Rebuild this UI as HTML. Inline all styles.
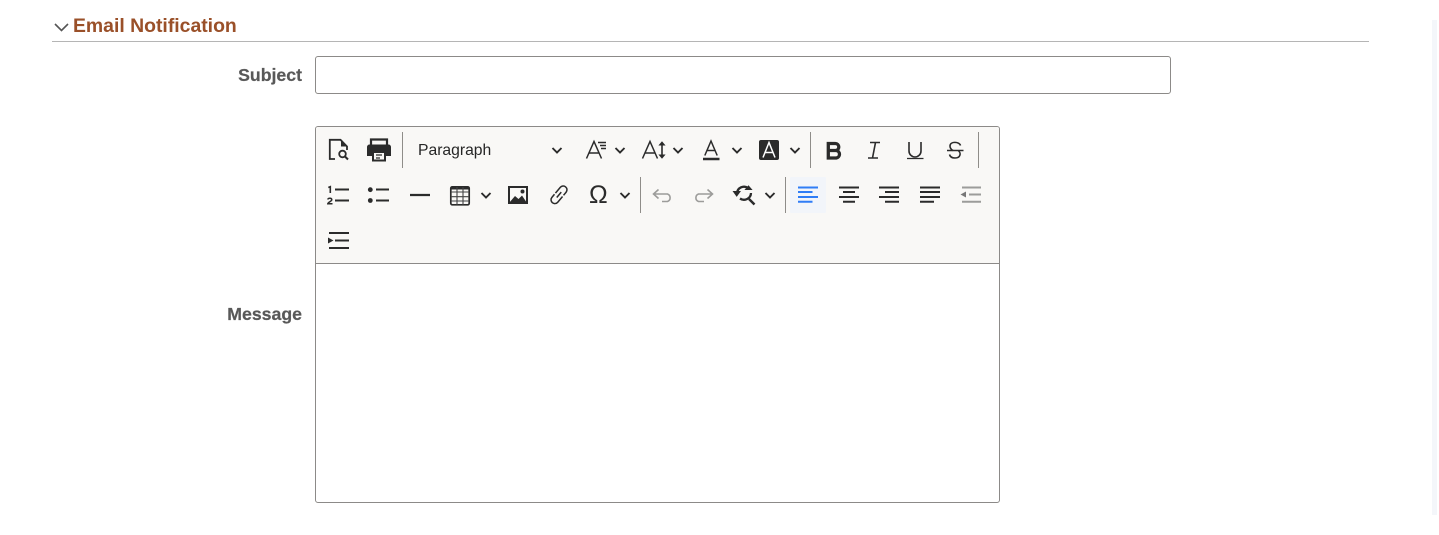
<!DOCTYPE html>
<html lang="en">
<head>
<meta charset="utf-8">
<title>Email Notification</title>
<style>
html,body{margin:0;padding:0;background:#fff;width:1439px;height:535px;overflow:hidden;font-family:"Liberation Sans",Arial,sans-serif}
.abs{position:absolute}
.title{left:73px;top:15px;font-size:19.400px;line-height:22px;font-weight:700;color:#9a5029;white-space:nowrap}
.rule{left:52px;top:41px;width:1317px;height:1px;background:#b5b5b5}
.label{font-size:17.700px;line-height:20px;font-weight:700;color:#595959;text-align:right;right:1137px;white-space:nowrap;-webkit-text-stroke:.2px #595959}
.input{left:315px;top:56px;width:854px;height:36px;border:1px solid #8c8a88;border-radius:3px;background:#fff}
.editor{left:315px;top:126px;width:683px;height:375px;border:1px solid #8c8a88;border-radius:3px;background:#fff;overflow:hidden}
.toolbar{left:0;top:0;width:683px;height:136px;background:#f9f8f6;border-bottom:1px solid #8c8a88}
.scroll{left:1432px;top:20px;width:5px;height:495px;background:#f4f6fa}
svg{position:absolute;left:0;top:0}
</style>
</head>
<body>
<div class="abs title">Email Notification</div>
<div class="abs rule"></div>
<div class="abs label" style="top:65px">Subject</div>
<div class="abs input"></div>
<div class="abs label" style="top:304px">Message</div>
<div class="abs editor"><div class="abs toolbar"></div></div>
<div class="abs scroll"></div>
<svg width="1439" height="535" viewBox="0 0 1439 535" fill="none" stroke="#2b2b2b" stroke-width="1.6">
<!-- section chevron -->
<path d="M55 24l6.500 6.500 6.500-6.500" stroke="#555" stroke-width="1.600"/>
<!-- separators -->
<g stroke="#8f8d89" stroke-width="1">
<path d="M402.500 132v36M810.500 132v36M978.500 132v36M640.500 177v36M785.500 177v36"/>
</g>
<!-- preview -->
<path d="M335 159H329.800V139.800H340.500L347 146.500V150" stroke-width="1.800"/>
<path d="M341 140.500l6 6h-6z" fill="#2b2b2b" stroke="none"/>
<circle cx="342.500" cy="154" r="3.300" stroke-width="1.800"/>
<path d="M345 156.500l3 3" stroke-width="2"/>
<!-- print -->
<path d="M371 146v-6.500h16v6.500" stroke-width="2.200"/>
<path d="M369.500 144.500h19a2.500 2.500 0 0 1 2.500 2.500v9h-5v-5h-14v5h-5v-9a2.500 2.500 0 0 1 2.500-2.500z" fill="#2b2b2b" stroke="none"/>
<path d="M373 152h12v8.500h-12z" stroke-width="2" fill="#f9f8f6"/>
<path d="M376 155h6M376 158h4" stroke-width="1.300"/>
<!-- chevrons -->
<g stroke-width="1.900">
<path d="M552.500 148l4.500 4.500 4.500-4.500"/>
<path d="M615.500 148l4.500 4.500 4.500-4.500"/>
<path d="M673.500 148l4.500 4.500 4.500-4.500"/>
<path d="M732.500 148l4.500 4.500 4.500-4.500"/>
<path d="M790.500 148l4.500 4.500 4.500-4.500"/>
<path d="M481.500 193l4.500 4.500 4.500-4.500"/>
<path d="M620.500 193l4.500 4.500 4.500-4.500"/>
<path d="M765.500 193l4.500 4.500 4.500-4.500"/>
</g>
<!-- font size -->
<path d="M586.500 158.500l7.500-17 7.500 17M589 153h10" stroke-width="1.500"/>
<path d="M598 142.500h8M600 145.500h6M601 148.500h5" stroke-width="1.400"/>
<!-- line height -->
<path d="M642.500 158.500l7.500-17 7.500 17M645 153h10" stroke-width="1.500"/>
<path d="M662 142.500v15" stroke-width="1.600"/>
<path d="M659.500 145l2.500-3 2.500 3zM659.500 155l2.500 3 2.500-3z" fill="#2b2b2b" stroke-width="1"/>
<!-- text colour -->
<path d="M704.800 155.500l6.200-14.500 6.200 14.500M707 150.500h8" stroke-width="1.500"/>
<path d="M703 159h16.500" stroke-width="2.400"/>
<!-- bg colour -->
<rect x="759" y="140" width="20" height="20" rx="2" fill="#2b2b2b" stroke="none"/>
<path d="M763 157.500l6-15 6 15M765 152.500h8" stroke="#fff" stroke-width="1.500"/>
<!-- B I U S -->
<path d="M828.300 143.500h7a3.500 3.500 0 0 1 0 7h-7zM828.300 150.500h8a3.800 3.800 0 0 1 0 7.500h-8z" stroke-width="3.300"/>
<path d="M870 142.500h10M868 158h10M875.500 142.500l-3 15.500" stroke-width="1.600"/>
<path d="M909 142v9a6 6 0 0 0 12 0v-9" stroke-width="1.600"/>
<path d="M907 158.500h16.500" stroke-width="1.300"/>
<path d="M960.500 145.500C959.500 141.500 950 141 950 146c0 2 1 3.500 3 4.500M958.500 151C961 152.500 961 158 955 158c-3.500 0-5-1.500-5.500-3.500" stroke-width="1.600"/>
<path d="M947 150.500h16.500" stroke-width="1.500"/>
<!-- numbered list -->
<path d="M335 189.500h14M335 200.500h14" stroke-width="2"/>
<path d="M328.300 187.500l2-.8v6.300" stroke-width="1.600"/>
<path d="M327.800 199.500c.4-1.700 4-1.700 4 .3 0 1.500-3.800 2.300-4 3.900h4.700" stroke-width="1.500"/>
<!-- bullet list -->
<circle cx="370.300" cy="189.700" r="2.400" fill="#2b2b2b" stroke="none"/>
<circle cx="370.300" cy="200.500" r="2.400" fill="#2b2b2b" stroke="none"/>
<path d="M376 189.500h13M376 200.500h13" stroke-width="2"/>
<!-- hr -->
<path d="M410 195h20" stroke-width="2.200"/>
<!-- table -->
<rect x="450.800" y="186.800" width="18.400" height="18" rx="1.500" stroke-width="1.700"/>
<path d="M451 187h18v2.500h-18z" fill="#2b2b2b" stroke="none"/>
<path d="M451 192h18M451 196.700h18M451 201h18M457 187v18M463 187v18" stroke-width="1.100" stroke="#444"/>
<!-- image -->
<rect x="509" y="187" width="18" height="16" stroke-width="2"/>
<path d="M509 203l6-7 3.500 3 3.500-3.500 5 7.500z" fill="#2b2b2b" stroke="none"/>
<circle cx="522.500" cy="191.500" r="2" fill="#2b2b2b" stroke="none"/>
<!-- link -->
<g transform="translate(559 194.800) rotate(-50)" stroke-width="1.500">
<path d="M-1 -3.800H6.500a3.800 3.800 0 0 1 0 7.600H2.500"/>
<path d="M1 3.800H-6.500a3.800 3.800 0 0 1 0-7.600H-2.500"/>
<path d="M-3.500 0H3.500"/>
</g>
<!-- omega -->
<text x="589" y="203" font-family="Liberation Sans,sans-serif" font-size="25" fill="#2b2b2b" stroke="none">Ω</text>
<!-- undo redo -->
<g stroke="#9c9c9a" stroke-width="1.600">
<path d="M658.500 189.500l-5 4.500 5 4.500M654 194h13.500a4 4 0 0 1 0 7.500H662"/>
<path d="M707.500 189.500l5 4.500-5 4.500M712 194h-13.500a4 4 0 0 0 0 7.500h5.500"/>
</g>
<!-- find replace -->
<path d="M737 193a7 7 0 0 1 11-5M751 193a7 7 0 0 1-11 5.500" stroke-width="2.300"/>
<path d="M749 199l5.500 5.500" stroke-width="2.500"/>
<path d="M733.500 191.500h6.500l-3.300 4.500zM745.500 189.500l3-3.500 3 3.500z" fill="#2b2b2b" stroke="#2b2b2b" stroke-width="1"/>
<!-- active align -->
<rect x="790" y="177" width="36" height="36" rx="1" fill="#f2f5fa" stroke="none"/>
<path d="M798 187.500h20M798 192h14.500M798 197h20M798 201.800h14.500" stroke="#2f7df6" stroke-width="2"/>
<!-- aligns -->
<g stroke-width="2">
<path d="M839 187.500h20M843 192h12M839 197h20M843 201.800h12"/>
<path d="M879 187.500h20M885 192h14M879 197h20M885 201.800h14"/>
<path d="M920 187.500h20M920 192h20M920 197h20M920 201.800h14"/>
</g>
<!-- outdent -->
<path d="M962 187.500h19M969 194.500h12M962 201.800h19" stroke="#9c9c9a" stroke-width="2"/>
<path d="M966 191.500v6l-5.500-3z" fill="#777" stroke="none"/>
<!-- indent -->
<path d="M329 233h20M335 240.500h14M329 248h20" stroke-width="2"/>
<path d="M328 237.500v6l5.500-3z" fill="#2b2b2b" stroke="none"/>
<!-- paragraph -->
<text x="418" y="155" font-family="Liberation Sans,sans-serif" font-size="15.700" fill="#262626" stroke="none">Paragraph</text>
</svg>
</body>
</html>
